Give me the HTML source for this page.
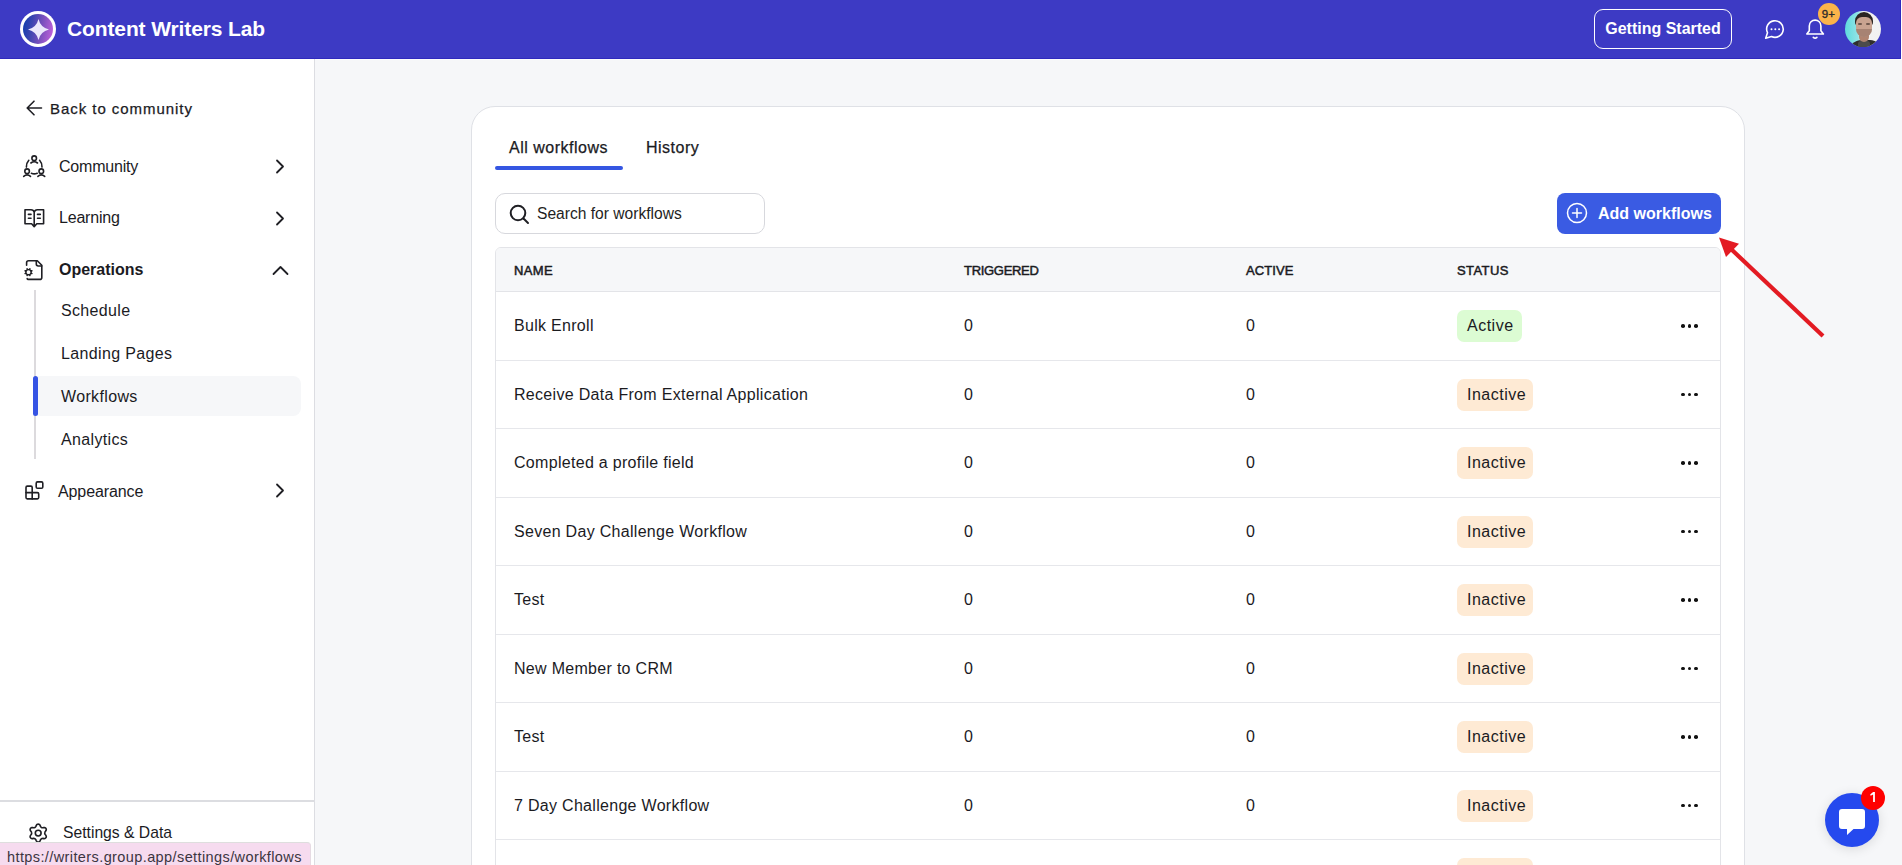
<!DOCTYPE html>
<html>
<head>
<meta charset="utf-8">
<style>
*{box-sizing:border-box;margin:0;padding:0}
html,body{width:1902px;height:865px;overflow:hidden;background:#f6f7f9;font-family:"Liberation Sans",sans-serif;color:#1b1b1f}
.abs{position:absolute}
#hdr{position:absolute;left:0;top:0;width:1901px;height:59px;background:#3d3ac4;border-bottom:1px solid #2f29bd;border-right:1px solid #2f29bd}
#logo{position:absolute;left:20px;top:11px;width:36px;height:36px;border-radius:50%;background:#fff}
#logo .in{position:absolute;left:3px;top:3px;width:30px;height:30px;border-radius:50%;background:linear-gradient(100deg,#0a3cae 0%,#3d45b0 30%,#7a50bd 60%,#c964de 100%)}
#brand{position:absolute;left:67px;top:17px;font-size:21px;letter-spacing:-0.12px;font-weight:bold;color:#fff;white-space:nowrap}
#gs{position:absolute;left:1594px;top:9px;width:138px;height:40px;border:1.3px solid #fff;border-radius:9px;color:#fff;font-size:16px;font-weight:bold;text-align:center;line-height:38px}
#side{position:absolute;left:0;top:59px;width:315px;height:806px;background:#fff;border-right:1px solid #dcdde2}
.si{position:absolute;font-size:16px;white-space:nowrap}
#card{position:absolute;left:471px;top:106px;width:1274px;height:800px;background:#fff;border:1px solid #dfe1e6;border-radius:24px}
.tab{position:absolute;font-size:16px;white-space:nowrap;letter-spacing:0.5px;-webkit-text-stroke:0.25px #1b1b1f}
.sub{letter-spacing:0.35px}
#search{position:absolute;left:495px;top:193px;width:270px;height:41px;border:1px solid #d7d8dd;border-radius:10px;background:#fff}
#addbtn{position:absolute;left:1557px;top:193px;width:164px;height:41px;background:#3a5be3;border-radius:8px;color:#fff}
#tbl{position:absolute;left:495px;top:247px;width:1226px;height:700px;border:1px solid #e3e4e8;border-radius:6px 6px 0 0;background:#fff;overflow:hidden}
#thead{position:absolute;left:0;top:0;width:100%;height:44px;background:#f6f7f9;border-bottom:1px solid #e3e4e8}
.th{position:absolute;top:15px;font-size:13px;-webkit-text-stroke:0.5px #1b1b1f}
.row{position:absolute;left:0;width:100%;height:68.5px;border-bottom:1px solid #e6e7eb}
.cell{position:absolute;font-size:16px;white-space:nowrap}
.c1{letter-spacing:0.3px}
.pill{position:absolute;left:961px;height:32px;border-radius:7px;font-size:16px;line-height:32px;padding-left:10px;letter-spacing:0.5px}
.dots{position:absolute;left:1185px;top:32px;width:18px;height:4px}
.c1{left:18px;top:25px}.c2{left:468px;top:25px}.c3{left:750px;top:25px}.pill{top:18px}.act{background:#dcfcd3;width:65px}.ina{background:#feead4;width:76px}
.dots i{position:absolute;top:0;width:3.6px;height:3.6px;border-radius:50%;background:#111}
</style>
</head>
<body>
<div id="hdr">
  <div id="logo"><div class="in"></div>
    <svg class="abs" style="left:7.5px;top:7.5px" width="21" height="21" viewBox="0 0 20 20"><path d="M10 0 Q11.9 8.1 20 10 Q11.9 11.9 10 20 Q8.1 11.9 0 10 Q8.1 8.1 10 0Z" fill="#ebe7fb"/></svg>
  </div>
  <div id="brand">Content Writers Lab</div>
  <div id="gs">Getting Started</div>
  <svg class="abs" style="left:1760px;top:14px" width="30" height="30" viewBox="0 0 30 30" fill="none" stroke="#fff" stroke-width="1.6" stroke-linejoin="round"><path d="M7.5 18.7 L5.7 24.2 L11.5 22.6 A8.3 8.3 0 1 0 7.5 18.7 Z"/><circle cx="11.5" cy="15.3" r="1" fill="#fff" stroke="none"/><circle cx="15.3" cy="15.3" r="1" fill="#fff" stroke="none"/><circle cx="19.1" cy="15.3" r="1" fill="#fff" stroke="none"/></svg>
  <svg class="abs" style="left:1800px;top:0px" width="30" height="45" viewBox="0 0 30 45" fill="none" stroke="#fff" stroke-width="1.6" stroke-linejoin="round" stroke-linecap="round"><path d="M6.8 34 L9.3 30.8 V25.9 A5.8 5.8 0 0 1 20.9 25.9 V30.8 L23.4 34 Z"/><path d="M13.3 37.3 Q15.1 39 16.9 37.3"/></svg>
  <div class="abs" style="left:1818px;top:3px;width:22px;height:22px;border-radius:50%;background:#fbb34a;color:#2b2b2b;font-size:11.5px;text-align:center;line-height:22px;-webkit-text-stroke:0.35px #2b2b2b;letter-spacing:0.3px;text-indent:-1px">9+</div>
  <div class="abs" style="left:1845px;top:11px;width:36px;height:36px;border-radius:50%;overflow:hidden;background:linear-gradient(90deg,#5edade 0%,#8fe3e6 35%,#f3f3f3 50%,#f1f1f1 100%)">
    <div class="abs" style="left:3px;top:29px;width:34px;height:14px;border-radius:14px 12px 0 0;background:#2f2e2d"></div>
    <div class="abs" style="left:13px;top:30px;width:12px;height:10px;border-radius:3px;background:#4c4b4a"></div>
    <div class="abs" style="left:14px;top:24px;width:10px;height:7px;border-radius:0 0 5px 5px;background:#b08470"></div>
    <div class="abs" style="left:10px;top:1px;width:18px;height:14px;border-radius:9px 9px 4px 4px;background:#2b2522"></div>
    <div class="abs" style="left:11px;top:6px;width:16px;height:20px;border-radius:6px 6px 8px 8px;background:#c9a390"></div>
    <div class="abs" style="left:11px;top:18px;width:16px;height:8px;border-radius:0 0 8px 8px;background:#8a6a5b;opacity:0.55"></div>
    <div class="abs" style="left:13px;top:12px;width:4px;height:2px;border-radius:1px;background:#4a3830;opacity:0.7"></div>
    <div class="abs" style="left:21px;top:12px;width:4px;height:2px;border-radius:1px;background:#4a3830;opacity:0.7"></div>
  </div>
</div>

<div class="abs" style="left:1901px;top:0;width:1px;height:60px;background:#fff"></div>
<div class="abs" style="left:315px;top:59px;width:1587px;height:1px;background:#fcfcfd"></div>
<div id="side">
  <svg class="abs" style="left:26px;top:41px" width="17" height="16" viewBox="0 0 17 16" fill="none" stroke="#1f1f24" stroke-width="1.6" stroke-linecap="round" stroke-linejoin="round"><path d="M15.5 8 H1.5 M8 1.2 L1.2 8 L8 14.8"/></svg>
  <div class="si" style="left:50px;top:41px;font-size:15px;letter-spacing:0.95px;-webkit-text-stroke:0.25px #1b1b1f">Back to community</div>

  <svg class="abs" style="left:20px;top:91px" width="30" height="30" viewBox="0 0 30 30" fill="none" stroke="#1f1f24" stroke-width="1.6" stroke-linecap="round"><circle cx="14.2" cy="8.2" r="2.3"/><path d="M10.9 13 Q14.2 10.4 17.5 13"/><path d="M8.8 10.3 Q6.3 13 6.4 17.1"/><path d="M19.6 10.3 Q22.1 13 22 17.1"/><circle cx="7.1" cy="21.2" r="2.3"/><path d="M3.7 26.4 Q7.1 23.4 10.5 26.4"/><circle cx="21.3" cy="21.2" r="2.3"/><path d="M17.9 26.4 Q21.3 23.4 24.7 26.4"/><path d="M11.4 23.3 Q14.2 24.5 17.2 23.3"/></svg>
  <div class="si" style="left:59px;top:99px;letter-spacing:-0.2px">Community</div>
  <svg class="abs" style="left:275px;top:100px" width="10" height="15" viewBox="0 0 10 15" fill="none" stroke="#1f1f24" stroke-width="1.8" stroke-linecap="round" stroke-linejoin="round"><path d="M2 1.5 L8 7.5 L2 13.5"/></svg>

  <svg class="abs" style="left:20px;top:144px" width="30" height="30" viewBox="0 0 30 30" fill="none" stroke="#1f1f24" stroke-width="1.6" stroke-linecap="round" stroke-linejoin="round"><path d="M14.2 9.3 Q13.6 6.8 11 6.8 H5 V20.8 H11.6 L14.2 23.6 L16.8 20.8 H23.6 V6.8 H17.4 Q14.8 6.8 14.2 9.3 V21.6"/><path d="M8.4 11.4 H11 M8.4 15.3 H11 M17.5 11.4 H20.3 M17.5 15.3 H20.3"/></svg>
  <div class="si" style="left:59px;top:150px;letter-spacing:-0.2px">Learning</div>
  <svg class="abs" style="left:275px;top:152px" width="10" height="15" viewBox="0 0 10 15" fill="none" stroke="#1f1f24" stroke-width="1.8" stroke-linecap="round" stroke-linejoin="round"><path d="M2 1.5 L8 7.5 L2 13.5"/></svg>

  <svg class="abs" style="left:20px;top:196px" width="30" height="30" viewBox="0 0 30 30" fill="none" stroke="#1f1f24" stroke-width="1.6" stroke-linecap="round" stroke-linejoin="round"><path d="M6.6 10.2 V7.7 Q6.6 5.7 8.6 5.7 H17.3 L21.8 10.2 V22.4 Q21.8 24.4 19.8 24.4 H8.3 Q7.3 24.4 7.2 23.6"/><path d="M16.3 5.9 V9.1 Q16.3 11 18.2 11 H21.6"/><path fill="#1f1f24" stroke="none" fill-rule="evenodd" d="M8.5 13.9L8.7 13.9L9.0 13.8L9.3 13.4L9.6 13.1L9.9 13.1L10.2 13.1L10.4 13.3L10.6 13.5L10.6 14.0L10.6 14.5L10.7 14.7L10.8 14.9L11.0 15.0L11.2 15.1L11.7 15.1L12.2 15.1L12.4 15.3L12.6 15.5L12.6 15.8L12.6 16.1L12.3 16.4L11.9 16.7L11.8 17.0L11.8 17.2L11.8 17.4L11.9 17.7L12.3 18.0L12.6 18.3L12.6 18.6L12.6 18.9L12.4 19.1L12.2 19.3L11.7 19.3L11.2 19.3L11.0 19.4L10.8 19.5L10.7 19.7L10.6 19.9L10.6 20.4L10.6 20.9L10.4 21.1L10.2 21.3L9.9 21.3L9.6 21.3L9.3 21.0L9.0 20.6L8.7 20.5L8.5 20.5L8.3 20.5L8.0 20.6L7.7 21.0L7.4 21.3L7.1 21.3L6.8 21.3L6.6 21.1L6.4 20.9L6.4 20.4L6.4 19.9L6.3 19.7L6.2 19.5L6.0 19.4L5.8 19.3L5.3 19.3L4.8 19.3L4.6 19.1L4.4 18.9L4.4 18.6L4.4 18.3L4.7 18.0L5.1 17.7L5.2 17.4L5.2 17.2L5.2 17.0L5.1 16.7L4.7 16.4L4.4 16.1L4.4 15.8L4.4 15.5L4.6 15.3L4.8 15.1L5.3 15.1L5.8 15.1L6.0 15.0L6.2 14.9L6.3 14.7L6.4 14.5L6.4 14.0L6.4 13.5L6.6 13.3L6.8 13.1L7.1 13.1L7.4 13.1L7.7 13.4L8.0 13.8L8.3 13.9Z M8.5 15.3 A1.9 1.9 0 1 0 8.5 19.1 A1.9 1.9 0 1 0 8.5 15.3Z"/></svg>
  <div class="si" style="left:59px;top:202px;font-weight:bold">Operations</div>
  <svg class="abs" style="left:272px;top:206px" width="17" height="11" viewBox="0 0 17 11" fill="none" stroke="#1f1f24" stroke-width="1.8" stroke-linecap="round" stroke-linejoin="round"><path d="M1.5 9 L8.5 2 L15.5 9"/></svg>

  <div class="abs" style="left:34px;top:231px;width:2px;height:169px;background:#dcdadd"></div>
  <div class="si sub" style="left:61px;top:243px">Schedule</div>
  <div class="si sub" style="left:61px;top:286px">Landing Pages</div>
  <div class="abs" style="left:33px;top:317px;width:268px;height:40px;background:#f6f7f9;border-radius:8px"></div>
  <div class="abs" style="left:33px;top:317px;width:5px;height:40px;background:#3654e4;border-radius:3px"></div>
  <div class="si sub" style="left:61px;top:329px">Workflows</div>
  <div class="si sub" style="left:61px;top:372px">Analytics</div>

  <svg class="abs" style="left:20px;top:417px" width="30" height="30" viewBox="0 0 30 30" fill="none" stroke="#1f1f24" stroke-width="1.6" stroke-linecap="round" stroke-linejoin="round"><path d="M6 11.4 Q6 10.1 7.3 10.1 H10.9 Q12.2 10.1 12.2 11.4 V16.6 H17.4 Q18.7 16.6 18.7 17.9 V21.6 Q18.7 22.9 17.4 22.9 H7.3 Q6 22.9 6 21.6 Z"/><path d="M6 16.6 H12.2 V22.9"/><rect x="16.2" y="5.9" width="6.6" height="6.3" rx="1.3"/></svg>
  <div class="si" style="left:58px;top:424px;letter-spacing:-0.1px">Appearance</div>
  <svg class="abs" style="left:275px;top:424px" width="10" height="15" viewBox="0 0 10 15" fill="none" stroke="#1f1f24" stroke-width="1.8" stroke-linecap="round" stroke-linejoin="round"><path d="M2 1.5 L8 7.5 L2 13.5"/></svg>

  <div class="abs" style="left:0;top:741px;width:314px;height:2px;background:#dcdde1"></div>
  <svg class="abs" style="left:24px;top:759px" width="30" height="30" viewBox="0 0 30 30" fill="none" stroke="#1f1f24" stroke-width="1.6" stroke-linejoin="round"><path d="M14.2 6.1L14.8 6.2L15.3 6.4L15.8 6.9L16.2 7.6L16.5 8.4L16.8 8.8L17.1 9.2L17.4 9.5L17.8 9.6L18.3 9.7L18.9 9.8L19.7 9.6L20.5 9.6L21.1 9.8L21.6 10.1L22.0 10.6L22.2 11.1L22.3 11.8L22.1 12.4L21.7 13.1L21.2 13.7L20.9 14.2L20.8 14.7L20.7 15.1L20.8 15.5L20.9 16.0L21.2 16.5L21.7 17.1L22.1 17.8L22.3 18.4L22.2 19.1L22.0 19.6L21.6 20.1L21.1 20.4L20.5 20.6L19.7 20.6L18.9 20.4L18.3 20.5L17.8 20.6L17.4 20.7L17.1 21.0L16.8 21.4L16.5 21.8L16.2 22.6L15.8 23.3L15.3 23.8L14.8 24.0L14.2 24.1L13.6 24.0L13.1 23.8L12.6 23.3L12.2 22.6L11.9 21.8L11.6 21.4L11.3 21.0L11.0 20.7L10.6 20.6L10.1 20.5L9.5 20.4L8.7 20.6L7.9 20.6L7.3 20.4L6.8 20.1L6.4 19.6L6.2 19.1L6.1 18.4L6.3 17.8L6.7 17.1L7.2 16.5L7.5 16.0L7.6 15.5L7.7 15.1L7.6 14.7L7.5 14.2L7.2 13.7L6.7 13.1L6.3 12.4L6.1 11.8L6.2 11.1L6.4 10.6L6.8 10.1L7.3 9.8L7.9 9.6L8.7 9.6L9.5 9.8L10.1 9.7L10.6 9.6L10.9 9.5L11.3 9.2L11.6 8.8L11.9 8.4L12.2 7.6L12.6 6.9L13.1 6.4L13.6 6.2Z"/><circle cx="14.2" cy="15.1" r="2.9"/></svg>
  <div class="si" style="left:63px;top:765px;font-size:15.7px">Settings &amp; Data</div>
  <div class="abs" style="left:0;top:783px;width:311px;height:30px;background:#f6dbef;border-top:1px solid #dedede;border-right:1px solid #e6dbe3;border-radius:0 4px 0 0"></div>
  <div class="abs" style="left:7px;top:790px;font-size:14.5px;letter-spacing:0.4px;color:#3b3541;white-space:nowrap">https://writers.group.app/settings/workflows</div>
</div>

<div id="card"></div>
<div class="tab" style="left:509px;top:139px">All workflows</div>
<div class="tab" style="left:646px;top:139px">History</div>
<div class="abs" style="left:495px;top:166px;width:128px;height:4px;background:#3556e2;border-radius:2px"></div>

<div id="search">
  <svg class="abs" style="left:13px;top:10px" width="21" height="21" viewBox="0 0 21 21" fill="none" stroke="#1f1f24" stroke-width="2" stroke-linecap="round"><circle cx="9" cy="9" r="7.3"/><path d="M14.5 14.5 L19 19"/></svg>
  <div class="abs" style="left:41px;top:11px;font-size:15.6px;white-space:nowrap;color:#1f1f24">Search for workflows</div>
</div>

<div id="addbtn">
  <svg class="abs" style="left:9px;top:9px" width="22" height="22" viewBox="0 0 22 22" fill="none" stroke="#fff" stroke-width="1.5" stroke-linecap="round"><circle cx="11" cy="11" r="9.5"/><path d="M11 6.5 V15.5 M6.5 11 H15.5"/></svg>
  <div class="abs" style="left:41px;top:12px;font-size:16px;font-weight:bold;white-space:nowrap">Add workflows</div>
</div>

<div id="tbl">
  <div id="thead">
    <div class="th" style="left:18px;letter-spacing:0.4px">NAME</div>
    <div class="th" style="left:468px;letter-spacing:-0.3px">TRIGGERED</div>
    <div class="th" style="left:750px;letter-spacing:0.1px">ACTIVE</div>
    <div class="th" style="left:961px;letter-spacing:0.4px">STATUS</div>
  </div>
  <div id="rows">
<div class="row" style="top:44.0px"><div class="cell c1">Bulk Enroll</div><div class="cell c2">0</div><div class="cell c3">0</div><div class="pill act">Active</div><div class="dots"><i style="left:0"></i><i style="left:6.6px"></i><i style="left:13.2px"></i></div></div>
<div class="row" style="top:112.5px"><div class="cell c1">Receive Data From External Application</div><div class="cell c2">0</div><div class="cell c3">0</div><div class="pill ina">Inactive</div><div class="dots"><i style="left:0"></i><i style="left:6.6px"></i><i style="left:13.2px"></i></div></div>
<div class="row" style="top:181.0px"><div class="cell c1">Completed a profile field</div><div class="cell c2">0</div><div class="cell c3">0</div><div class="pill ina">Inactive</div><div class="dots"><i style="left:0"></i><i style="left:6.6px"></i><i style="left:13.2px"></i></div></div>
<div class="row" style="top:249.5px"><div class="cell c1">Seven Day Challenge Workflow</div><div class="cell c2">0</div><div class="cell c3">0</div><div class="pill ina">Inactive</div><div class="dots"><i style="left:0"></i><i style="left:6.6px"></i><i style="left:13.2px"></i></div></div>
<div class="row" style="top:318.0px"><div class="cell c1">Test</div><div class="cell c2">0</div><div class="cell c3">0</div><div class="pill ina">Inactive</div><div class="dots"><i style="left:0"></i><i style="left:6.6px"></i><i style="left:13.2px"></i></div></div>
<div class="row" style="top:386.5px"><div class="cell c1">New Member to CRM</div><div class="cell c2">0</div><div class="cell c3">0</div><div class="pill ina">Inactive</div><div class="dots"><i style="left:0"></i><i style="left:6.6px"></i><i style="left:13.2px"></i></div></div>
<div class="row" style="top:455.0px"><div class="cell c1">Test</div><div class="cell c2">0</div><div class="cell c3">0</div><div class="pill ina">Inactive</div><div class="dots"><i style="left:0"></i><i style="left:6.6px"></i><i style="left:13.2px"></i></div></div>
<div class="row" style="top:523.5px"><div class="cell c1">7 Day Challenge Workflow</div><div class="cell c2">0</div><div class="cell c3">0</div><div class="pill ina">Inactive</div><div class="dots"><i style="left:0"></i><i style="left:6.6px"></i><i style="left:13.2px"></i></div></div>
<div class="row" style="top:592.0px"><div class="cell c1">Test</div><div class="cell c2">0</div><div class="cell c3">0</div><div class="pill ina">Inactive</div><div class="dots"><i style="left:0"></i><i style="left:6.6px"></i><i style="left:13.2px"></i></div></div>
</div>
</div>

<svg class="abs" style="left:1700px;top:220px" width="140" height="130" viewBox="1700 220 140 130"><path d="M1823 336 L1731 249" stroke="#e31b23" stroke-width="4.2" stroke-linecap="butt"/><path d="M1719 237.5 L1739 243.7 L1726 257 Z" fill="#e31b23"/></svg>

<div class="abs" style="left:1825px;top:793px;width:54px;height:54px;border-radius:50%;background:#2549ee;box-shadow:0 2px 12px rgba(0,0,0,0.12)">
  <svg class="abs" style="left:13px;top:15px" width="28" height="28" viewBox="0 0 28 28"><path d="M4 1 H24 Q27 1 27 4 V18 Q27 21 24 21 H15.5 L9 27 V21 H4 Q1 21 1 18 V4 Q1 1 4 1Z" fill="#fff"/></svg>
</div>
<div class="abs" style="left:1861px;top:786px;width:24px;height:24px;border-radius:50%;background:#ff0000"><svg class="abs" style="left:0;top:0" width="24" height="24" viewBox="0 0 24 24"><path d="M12.1 6.1 H13.9 V16 H12.1 V8.4 L9.6 9.8 L9.2 8.6 Z" fill="#fff"/></svg></div>

</body>
</html>
